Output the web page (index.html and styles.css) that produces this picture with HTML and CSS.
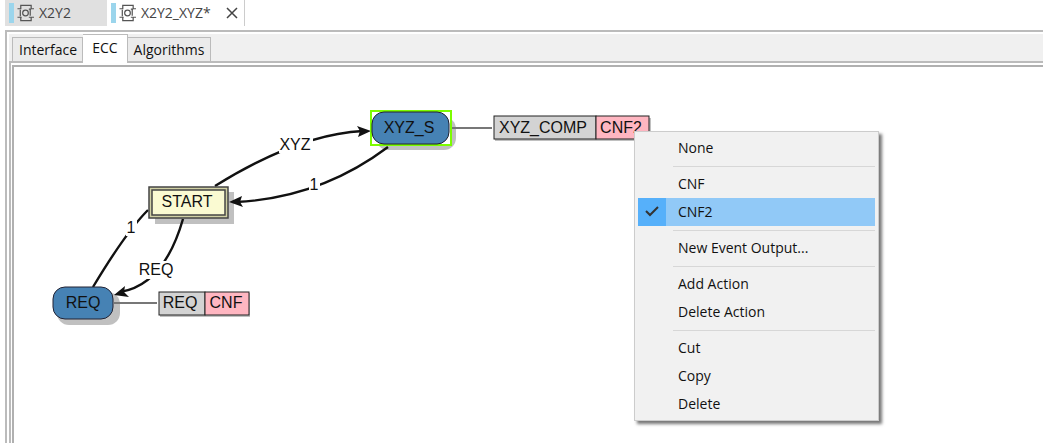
FILE: index.html
```html
<!DOCTYPE html>
<html lang="en">
<head>
<meta charset="utf-8">
<title>X2Y2_XYZ</title>
<link rel="stylesheet" href="styles.css">
</head>
<body>
<svg class="defs" aria-hidden="true">
  <symbol id="block" viewBox="0 0 18 18">
    <g fill="none" stroke="#555" stroke-width="1.3">
      <path d="M0.500 4.500H4V1H15V4.500H18M3.500 5.500V12.500M0.500 13.500H5M4 13.500V17H15V13.500M12.500 13.500H18M14 4.500V12M12.500 5H15"/>
      <circle cx="9" cy="9" r="3"/>
    </g>
  </symbol>
</svg>
<nav class="editors" aria-label="Editors">
  <button class="editor"><svg class="block-icon"><use href="#block"/></svg>X2Y2</button>
  <div class="editor editor-active">
    <button class="editor-name"><svg class="block-icon"><use href="#block"/></svg>X2Y2_XYZ*</button>
    <button class="close" aria-label="Close"><svg viewBox="0 0 12 12"><path d="M1 1l10 10M11 1L1 11"/></svg></button>
  </div>
</nav>
<main class="panel">
  <div class="pages" role="tablist">
    <button class="page" role="tab">Interface</button>
    <button class="page page-active" role="tab" aria-selected="true">ECC</button>
    <button class="page" role="tab">Algorithms</button>
  </div>
  <div class="page-body">
    <div class="canvas">
      <svg class="chart" width="640" height="300" viewBox="14 67 640 300" role="img" aria-label="Execution control chart">
        <g class="shadow">
          <rect x="155" y="192" width="79" height="32"/>
          <rect x="376" y="117" width="80" height="33" rx="12"/>
          <rect x="57" y="292" width="63" height="33" rx="12"/>
          <rect x="495" y="118" width="156" height="23"/>
          <rect x="160" y="293" width="90" height="24"/>
        </g>
        <g class="link">
          <path d="M452 128H492M114 303H157"/>
        </g>
        <g class="edge">
          <path d="M215 186Q299 134 363 131"/>
          <path d="M388 147Q320 198 236 202"/>
          <path d="M93 287C108 262 128 230 148 210"/>
          <path d="M183 219Q164 285 120 292"/>
        </g>
        <g class="head">
          <path d="M371 131L357 126L360 131L358 137Z"/>
          <path d="M229 202L242 196L240 202L243 207Z"/>
          <path d="M114 295L125 286L124 292L129 297Z"/>
        </g>
        <g class="gap">
          <rect x="279" y="136" width="34" height="17"/>
          <rect x="309" y="176" width="11" height="17"/>
          <rect x="126" y="218" width="11" height="18"/>
          <rect x="137" y="261" width="37" height="18"/>
        </g>
        <rect class="start-frame" x="149" y="187" width="79" height="31"/>
        <rect class="start" x="152" y="190" width="73" height="25"/>
        <rect class="selection" x="371" y="111" width="80" height="34"/>
        <rect class="state" x="372" y="112" width="77" height="32" rx="12"/>
        <rect class="state" x="53" y="287" width="60" height="32" rx="12"/>
        <rect class="algorithm" x="494" y="116" width="102" height="23"/>
        <rect class="output" x="596" y="116" width="53" height="23"/>
        <rect class="algorithm" x="159" y="292" width="46" height="23"/>
        <rect class="output" x="205" y="292" width="44" height="23"/>
        <g class="label">
          <text x="187" y="207">START</text>
          <text x="409" y="133">XYZ_S</text>
          <text x="83" y="308">REQ</text>
          <text x="295" y="150">XYZ</text>
          <text x="314" y="190">1</text>
          <text x="131" y="233">1</text>
          <text x="156" y="275">REQ</text>
          <text x="543" y="133">XYZ_COMP</text>
          <text x="621" y="133">CNF2</text>
          <text x="180" y="308">REQ</text>
          <text x="226" y="308">CNF</text>
        </g>
      </svg>
      <div class="menu" role="menu">
        <button class="item" role="menuitem">None</button>
        <hr class="rule">
        <button class="item" role="menuitem">CNF</button>
        <button class="item item-checked" role="menuitemradio" aria-checked="true"><svg class="check" viewBox="0 0 28 28"><path d="M8 13l4 4 8-8"/></svg>CNF2</button>
        <hr class="rule">
        <button class="item" role="menuitem">New Event Output...</button>
        <hr class="rule">
        <button class="item" role="menuitem">Add Action</button>
        <button class="item" role="menuitem">Delete Action</button>
        <hr class="rule">
        <button class="item" role="menuitem">Cut</button>
        <button class="item" role="menuitem">Copy</button>
        <button class="item" role="menuitem">Delete</button>
      </div>
    </div>
  </div>
</main>
</body>
</html>
```
FILE: styles.css
```css
* { box-sizing: border-box; }
body {
  margin: 0;
  min-height: 100vh;
  display: flex;
  flex-direction: column;
  background: #fff;
  color: #111;
  font: 14px/18px "Open Sans", "Noto Sans", sans-serif;
}
button {
  margin: 0;
  padding: 0;
  border: 0;
  background: none;
  color: inherit;
  font: inherit;
  text-align: left;
}
.defs { position: absolute; width: 0; height: 0; }

.editors { display: flex; height: 26px; padding-left: 5px; margin-bottom: 4px; color: #444; }
.editor { display: flex; align-items: center; gap: 5px; height: 26px; padding: 0 36px 0 4px; background: #e0e0e0; }
.editor-active { gap: 15px; padding: 0 6px 0 4px; background: #fff; border-right: 1px solid #ccc; }
.editor-name { display: flex; align-items: center; gap: 5px; }
.block-icon { width: 25px; height: 20px; padding: 1px 0 1px 3px; border-left: 5px solid #9bd5ec; }
.close { display: flex; }
.close svg { width: 12px; height: 12px; fill: none; stroke: #444; stroke-width: 1.5; }

.panel {
  flex: 1;
  display: flex;
  flex-direction: column;
  margin-left: 5px;
  padding: 2px 0 0 2px;
  border: solid #bbb;
  border-width: 2px 0 0 2px;
}
.pages { display: flex; align-items: flex-end; height: 27px; padding-left: 3px; background: #f0f0f0; }
.page { height: 24px; padding: 0 6px; background: #ebebeb; border: solid #bbb; border-width: 1px 1px 0 0; }
.page:first-child { padding-right: 5px; border-left-width: 1px; }
.page-active { position: relative; z-index: 1; height: 29px; margin-bottom: -2px; padding: 0 9px 2px; background: #fff; }
.page-body {
  flex: 1;
  display: flex;
  padding: 2px 0 0 1px;
  border: solid #bbb;
  border-width: 2px 0 0 2px;
}
.canvas { flex: 1; position: relative; border: solid #b0b0b0; border-width: 2px 0 0 2px; }

.chart { display: block; }
.shadow { fill: #c0c0c0; }
.link { stroke: #777; stroke-width: 2; }
.edge { fill: none; stroke: #111; stroke-width: 2.4; }
.head { fill: #111; }
.gap { fill: #fff; }
.start-frame { fill: #d0d0a4; stroke: #444; stroke-width: 1.5; }
.start { fill: #fafad2; stroke: #444; stroke-width: 1.5; }
.selection { fill: #fff; stroke: #7cfc00; stroke-width: 2; }
.state { fill: #4682b4; stroke: #223; stroke-width: 1; }
.algorithm { fill: #d3d3d3; stroke: #222; stroke-width: 1; }
.output { fill: #ffb6c1; stroke: #222; stroke-width: 1; }
.label { font: 16px "Liberation Sans", Arial, sans-serif; fill: #111; text-anchor: middle; }

/* Context menu floating over the chart */
.menu {
  position: absolute;
  left: 620px;
  top: 64px;
  width: 245px;
  padding: 2px 3px;
  background: #f1f1f1;
  border: 1px solid #ccc;
  box-shadow: 3px 3px 3px #777;
}
.item { position: relative; display: block; width: 100%; height: 28px; padding-left: 40px; }
.item-checked { background: #91c9f7; }
.check { position: absolute; left: 0; top: 0; width: 28px; height: 28px; background: #56b0fa; fill: none; stroke: #333; stroke-width: 2; }
.rule { height: 1px; margin: 4px 0 3px 35px; border: 0; background: #d7d7d7; }
```
